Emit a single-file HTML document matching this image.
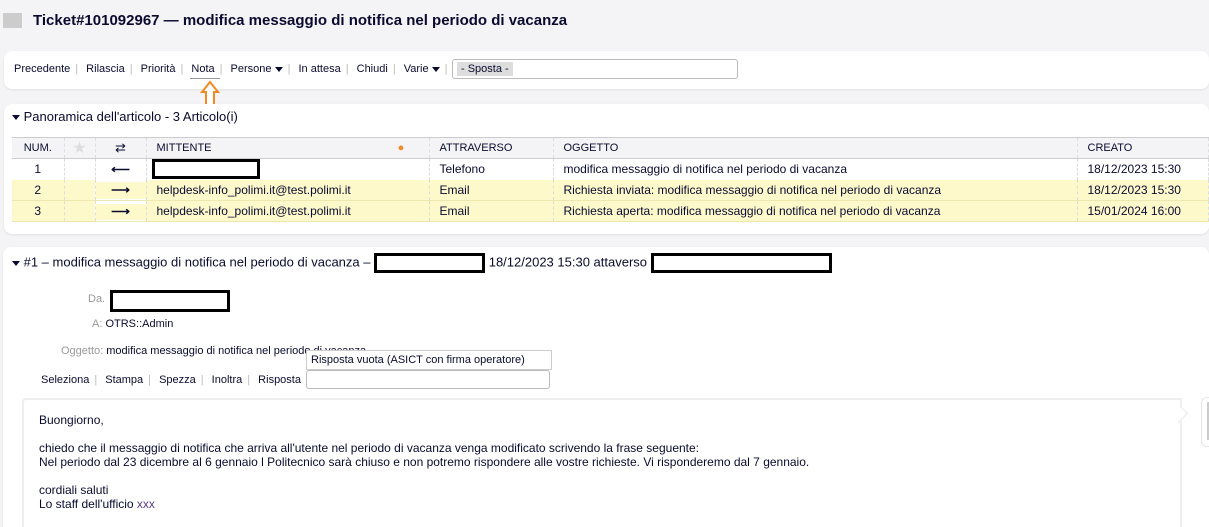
<!DOCTYPE html>
<html><head><meta charset="utf-8"><style>
*{margin:0;padding:0;box-sizing:border-box}
html{width:1209px;height:527px;overflow:hidden}
body{width:1209px;height:527px;overflow:hidden;background:#f4f4f6;font-family:"Liberation Sans",Arial,sans-serif;font-size:12px;color:#0a0a30;position:relative}
.abs{position:absolute;white-space:nowrap}
.panel{position:absolute;background:#fff;border-radius:8px;box-shadow:0 1px 2px rgba(0,0,0,.08)}
.tb span.s{color:#bbb;margin:0 5px}
table{border-collapse:collapse;position:absolute;left:12px;top:137px;width:1197px}
td,th{height:21px;font-weight:normal;text-align:left;padding-left:10px;border-right:1px dashed #ddd}
th{background:#f4f4f6;border-top:1px solid #ccc;border-bottom:1px solid #ccc;font-size:11px}
tr.y td{background:#fdf9cb;border-bottom:1px solid #eee8b0}
.c{text-align:center;padding-left:0}
.ar{font-weight:bold;font-size:13px;transform:scaleY(.8)}
.red{display:inline-block;border:3px solid #000;background:#fff;vertical-align:middle}
.tri{display:inline-block;width:0;height:0;border-left:4px solid transparent;border-right:4px solid transparent;border-top:5px solid #0a0a30;vertical-align:middle}
</style></head><body>
<div class="abs" style="left:3px;top:13px;width:19px;height:15px;background:#ccc"></div>
<div class="abs" style="left:33px;top:12px;font-size:15px;font-weight:bold;color:#0a0a30">Ticket#101092967 — modifica messaggio di notifica nel periodo di vacanza</div>

<div class="panel" style="left:4px;top:51px;width:1205px;height:38px"></div>
<div class="abs tb" style="left:14px;top:63px;font-size:11px">Precedente<span class="s">|</span> Rilascia<span class="s">|</span> Priorità<span class="s">|</span> Nota<span class="s">|</span> Persone <span class="tri"></span><span class="s">|</span> In attesa<span class="s">|</span> Chiudi<span class="s">|</span> Varie <span class="tri"></span><span class="s">|</span></div>
<div class="abs" style="left:190px;top:78px;width:30px;height:1px;background:#999"></div>
<div class="abs" style="left:452px;top:59px;width:286px;height:20px;border:1px solid #bbb;border-radius:3px;background:#fff"><span style="position:absolute;left:4px;top:2px;background:#ddd;padding:1px 4px;font-size:11px">- Sposta -</span></div>
<svg class="abs" style="left:199px;top:80px" width="22" height="31"><path d="M11 2 L19 12 L15 12 L15 29 L7 29 L7 12 L3 12 Z" fill="#fff" stroke="#f08a24" stroke-width="2"/></svg>

<div class="panel" style="left:4px;top:104px;width:1205px;height:130px"></div>
<div class="abs" style="left:12px;top:109px;font-size:13px"><span class="tri"></span> Panoramica dell'articolo - 3 Articolo(i)</div>
<table>
<tr><th class="c" style="width:52px">NUM.</th><th class="c" style="width:31px;color:#ddd;font-size:16px">★</th><th class="c" style="width:51px;font-size:13px">⇄</th><th style="width:283px">MITTENTE <span style="color:#f08a24;margin-left:183px">●</span></th><th style="width:124px">ATTRAVERSO</th><th style="width:524px">OGGETTO</th><th>CREATO</th></tr>
<tr><td class="c">1</td><td></td><td class="c ar">⟵</td><td style="padding-left:5px"><span class="red" style="width:108px;height:20px"></span></td><td>Telefono</td><td>modifica messaggio di notifica nel periodo di vacanza</td><td>18/12/2023 15:30</td></tr>
<tr class="y"><td class="c">2</td><td></td><td class="c ar">⟶</td><td>helpdesk-info_polimi.it@test.polimi.it</td><td>Email</td><td>Richiesta inviata: modifica messaggio di notifica nel periodo di vacanza</td><td>18/12/2023 15:30</td></tr>
<tr class="y"><td class="c">3</td><td></td><td class="c ar">⟶</td><td>helpdesk-info_polimi.it@test.polimi.it</td><td>Email</td><td>Richiesta aperta: modifica messaggio di notifica nel periodo di vacanza</td><td>15/01/2024 16:00</td></tr>
</table>

<div class="panel" style="left:3px;top:247px;width:1206px;height:280px;border-radius:8px 8px 0 0"></div>
<div class="abs" style="left:12px;top:253px;font-size:13px"><span class="tri"></span> #1 – modifica messaggio di notifica nel periodo di vacanza – <span class="red" style="width:111px;height:20px"></span> 18/12/2023 15:30 attaverso <span class="red" style="width:181px;height:20px"></span></div>
<div class="abs" style="left:88px;top:293px;color:#999;font-size:11px">Da.</div>
<div class="abs" style="left:110px;top:290px;"><span class="red" style="width:120px;height:22px"></span></div>
<div class="abs" style="left:92px;top:318px;font-size:11px"><span style="color:#999">A:</span> OTRS::Admin</div>
<div class="abs" style="left:61px;top:345px;font-size:11px"><span style="color:#999">Oggetto:</span> modifica messaggio di notifica nel periodo di vacanza</div>
<div class="abs" style="left:41px;top:374px;font-size:11px">Seleziona<span style="color:#bbb;margin:0 5px">|</span> Stampa<span style="color:#bbb;margin:0 5px">|</span> Spezza<span style="color:#bbb;margin:0 5px">|</span> Inoltra<span style="color:#bbb;margin:0 5px">|</span> Risposta</div>
<div class="abs" style="left:306px;top:350px;width:246px;height:20px;border:1px solid #ccc;background:#fff;font-size:11px;padding:3px 4px">Risposta vuota (ASICT con firma operatore)</div>
<div class="abs" style="left:306px;top:370px;width:244px;height:19px;border:1px solid #bbb;border-radius:3px;background:#fff"></div>

<div class="abs" style="left:22px;top:398px;width:1160px;height:129px;border:2px solid #eee;border-bottom:none;border-radius:4px 0 0 0;background:#fff"></div>
<div class="abs" style="left:1173px;top:405px;width:14px;height:20px;background:#fff;border-right:2px solid #eee;border-top:2px solid #eee;transform:rotate(45deg) scale(.7);"></div>
<div class="abs" style="left:1201px;top:397px;width:8px;height:50px;border:1px solid #e4e4e4;border-right:none;border-radius:6px 0 0 6px;background:#fff"><div style="margin:4px 0 0 5px;width:3px;height:38px;background:#ccc"></div></div>
<div class="abs" style="left:39px;top:413px;font-size:12px;line-height:14px;white-space:pre">Buongiorno,

chiedo che il messaggio di notifica che arriva all'utente nel periodo di vacanza venga modificato scrivendo la frase seguente:
Nel periodo dal 23 dicembre al 6 gennaio l Politecnico sarà chiuso e non potremo rispondere alle vostre richieste. Vi risponderemo dal 7 gennaio.

cordiali saluti
Lo staff dell'ufficio <span style="color:#5a3a8a">xxx</span></div>
</body></html>
